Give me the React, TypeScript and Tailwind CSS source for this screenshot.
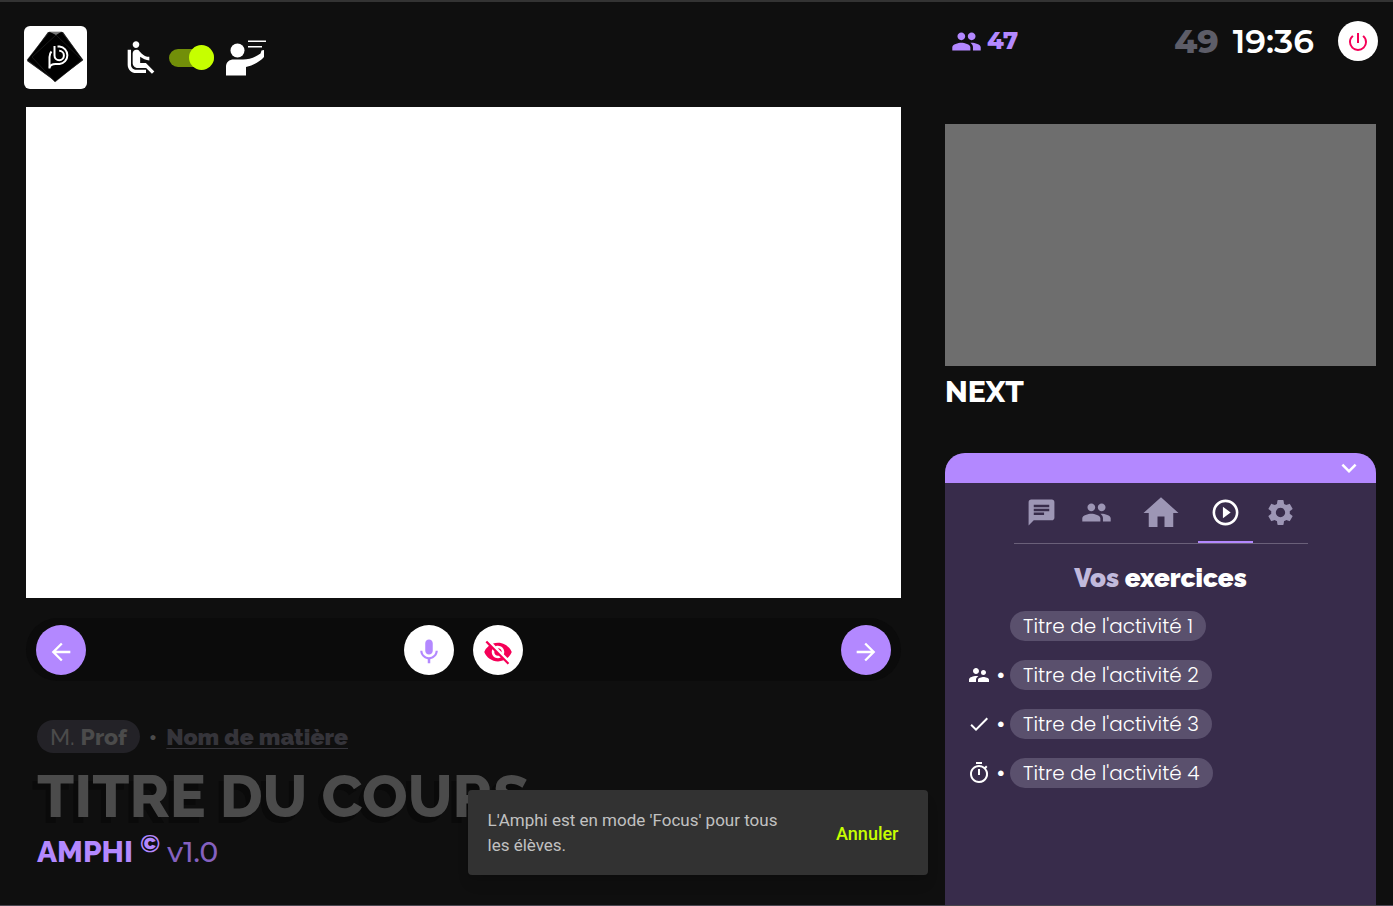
import { useState } from "react";
import type { ReactNode } from "react";
import {
  MdAirlineSeatReclineNormal,
  MdArrowBack,
  MdArrowForward,
  MdChat,
  MdCheck,
  MdExpandMore,
  MdHome,
  MdMic,
  MdOutlineTimer,
  MdPeople,
  MdPlayCircleOutline,
  MdPowerSettingsNew,
  MdSettings,
  MdSupervisorAccount,
  MdVisibilityOff,
} from "react-icons/md";

function Logo() {
  return (
    <svg viewBox="0 0 63 63" className="size-[63px] rounded-md bg-white" role="img" aria-label="Logo">
      <path d="M24 6h15l20 28-28 21L3 35z" fill="#222" />
      <path d="M25 6h13l21 28-28 21L3 34z" fill="#000" stroke="#444" strokeWidth="0.5" />
      <path d="M32 9 58 34 31 56 8 31z" fill="#000" stroke="#333" strokeWidth="0.5" />
      <path d="M26 6h11l-5 3z" fill="#777" />
      <g fill="none" stroke="#fff" strokeWidth="2">
        <path d="M25.500 42.500V31c0-2 .5-4 2-5.500" />
        <path d="M25.500 41.500c1-3 3-3.500 6-3.500h4a8.800 8.800 0 0 0 0-17.500h-2" />
        <path d="M30.500 20v9.500a4.700 4.700 0 1 0 4.700-4.700" />
      </g>
    </svg>
  );
}

function Teacher() {
  return (
    <svg viewBox="0 0 40 36" className="h-9 w-10" fill="#fff" aria-hidden="true">
      <circle cx="11.500" cy="10.500" r="7" />
      <path d="M0 35.500V27c0-5 3-7.500 8-7.500h9c6 0 12-2 17.500-6l1-3 2.500-.5v7c-4.500 5-10.500 8-18 10v8.500z" />
      <path d="M22 .5h18V2H22zM22 6h14v1.500H22z" />
    </svg>
  );
}

const tabs: { label: string; icon: ReactNode; width: string }[] = [
  { label: "Messages", icon: <MdChat size={31} />, width: "w-[55px]" },
  { label: "Participants", icon: <MdPeople size={31} />, width: "w-[55px]" },
  { label: "Accueil", icon: <MdHome size={42} />, width: "w-[74px]" },
  { label: "Exercices", icon: <MdPlayCircleOutline size={31} />, width: "w-[55px]" },
  { label: "Réglages", icon: <MdSettings size={31} />, width: "w-[55px]" },
];

const activities: { title: string; icon?: ReactNode }[] = [
  { title: "Titre de l'activité 1" },
  { title: "Titre de l'activité 2", icon: <MdSupervisorAccount size={24} /> },
  { title: "Titre de l'activité 3", icon: <MdCheck size={24} /> },
  { title: "Titre de l'activité 4", icon: <MdOutlineTimer size={24} /> },
];

export default function App() {
  const [focus, setFocus] = useState(true);
  const [tab, setTab] = useState(3);

  return (
    <div className="relative grid min-h-screen grid-cols-[67fr_33fr] gap-11 border-t-2 border-b border-t-[#333] border-b-[#4a4650] bg-[#0f0f0f] pr-[17px] pl-[26px] font-['Raleway','Montserrat','Open_Sans',sans-serif] text-white lining-nums">
      <main className="flex min-w-0 flex-col">
        <header className="-ml-0.5 flex h-[105px] items-start pt-6">
          <Logo />
          <MdAirlineSeatReclineNormal size={40} className="mt-3 ml-[34px]" />
          <label className="mt-[19px] ml-2 flex h-[25px] w-[45px] cursor-pointer items-center rounded-full">
            <input
              type="checkbox"
              role="switch"
              aria-label="Mode Focus"
              checked={focus}
              onChange={() => setFocus(!focus)}
              className="peer sr-only"
            />
            <span className="flex h-[18px] w-full items-center rounded-full bg-[#728f09] peer-checked:justify-end">
              <span className="size-[25px] rounded-full bg-[#c6ff00]" />
            </span>
          </label>
          <span className="mt-3.5 ml-3">
            <Teacher />
          </span>
        </header>

        <section aria-label="Présentation" className="aspect-[875/491] bg-white" />

        <nav className="mt-5 flex h-[63px] items-center justify-between rounded-full bg-[#0b0b0b] px-2.5">
          <button aria-label="Précédent" className="flex size-[50px] items-center justify-center rounded-full bg-[#b388ff] pt-1">
            <MdArrowBack size={28} />
          </button>
          <div className="flex gap-[19px]">
            <button aria-label="Micro" className="flex size-[50px] items-center justify-center rounded-full bg-white pt-1 text-[#b388ff]">
              <MdMic size={30} />
            </button>
            <button aria-label="Masquer" className="flex size-[50px] items-center justify-center rounded-full bg-white pt-1 text-[#f50057]">
              <MdVisibilityOff size={30} />
            </button>
          </div>
          <button aria-label="Suivant" className="flex size-[50px] items-center justify-center rounded-full bg-[#b388ff] pt-1">
            <MdArrowForward size={28} />
          </button>
        </nav>

        <section className="mt-[39px] pl-[11px]">
          <div className="flex items-center text-[23px] leading-[33px]">
            <span className="rounded-full bg-[#232227] px-[13px] font-medium text-[#4b4b4b]">
              M. <span className="font-extrabold">Prof</span>
            </span>
            <span className="mx-[9px] font-extrabold text-[#4b4b4b]">•</span>
            <a href="#matiere" className="font-black text-[#35343a] underline decoration-1 underline-offset-3">
              Nom de matière
            </a>
          </div>
          <h1 className="mt-2 text-[60px] leading-[70px] font-extrabold whitespace-nowrap text-[#4b4b4b] [text-shadow:-5px_6px_0_#0a0a0a]">
            TITRE DU COURS
          </h1>
          <p className="mt-[3px] flex text-[30px] leading-9 text-[#8561c0]">
            <span className="font-extrabold text-[#b388ff]">AMPHI</span>
            <span className="mx-[7px] text-[24px] leading-5 font-extrabold text-[#b388ff]">©</span>
            <span className="font-['Montserrat','Open_Sans',sans-serif] text-[28px] font-medium">v1.0</span>
          </p>
        </section>
      </main>

      <aside className="flex min-w-0 flex-col">
        <header className="-mr-0.5 flex h-[122px] items-start pt-[19px] font-['Montserrat','Open_Sans',sans-serif] leading-10">
          <span className="flex items-center pl-1.5 text-[24px] font-extrabold text-[#b388ff]">
            <MdPeople size={31} className="mr-[5px]" />
            47
          </span>
          <span className="ml-auto text-[33px] font-extrabold text-[#5d5d68]">49</span>
          <time className="ml-3.5 text-[33px] font-semibold">19:36</time>
          <button aria-label="Quitter" className="ml-6 flex size-10 items-center justify-center rounded-full bg-white pt-0.5 text-[#f50057]">
            <MdPowerSettingsNew size={24} />
          </button>
        </header>

        <div className="aspect-video bg-[#6e6e6e]" />
        <h2 className="mt-1.5 text-[30px] leading-10 font-extrabold">NEXT</h2>

        <section className="mt-[41px] flex flex-1 flex-col rounded-t-[20px] bg-[#382c4b]">
          <button aria-label="Réduire" className="flex h-[30px] items-center justify-end rounded-t-[20px] bg-[#b388ff] pr-3">
            <MdExpandMore size={30} />
          </button>
          <div role="tablist" className="mx-auto flex h-[61px] border-b border-[#6a6079]">
            {tabs.map((item, i) => (
              <button
                key={item.label}
                role="tab"
                aria-label={item.label}
                aria-selected={i === tab}
                onClick={() => setTab(i)}
                className={`flex items-center justify-center border-b-2 pt-px ${item.width} ${
                  i === tab ? "border-[#b388ff] text-white" : "border-transparent text-[#9d96b5]"
                }`}
              >
                {item.icon}
              </button>
            ))}
          </div>
          <h3 className="mt-4 text-center text-[26px] leading-9 font-black">
            <span className="text-[#c1b9dc]">Vos</span> exercices
          </h3>
          <ul className="mt-[15px] flex flex-col gap-[19px] pl-[22px] font-['Poppins','Open_Sans',sans-serif] text-[20px] leading-[30px]">
            {activities.map((item) => (
              <li key={item.title} className="flex items-center">
                <span className="flex w-[43px] items-center gap-[5px]">
                  {item.icon}
                  {item.icon && <span className="font-semibold">•</span>}
                </span>
                <button className="rounded-full bg-[#5a506d] px-[13px] font-light">{item.title}</button>
              </li>
            ))}
          </ul>
        </section>
      </aside>

      <div
        role="status"
        className="absolute bottom-[30px] left-1/2 ml-px flex w-[460px] -translate-x-1/2 items-center justify-between rounded bg-[#323232] pt-[18px] pr-[29px] pb-[17px] pl-5 font-['Roboto',sans-serif] text-[17px] leading-[25px] text-[#c1c1c1] shadow-lg"
      >
        <p className="w-[310px]">L'Amphi est en mode 'Focus' pour tous les élèves.</p>
        <button className="text-[18px] font-medium text-[#c6ff00]">Annuler</button>
      </div>
    </div>
  );
}
